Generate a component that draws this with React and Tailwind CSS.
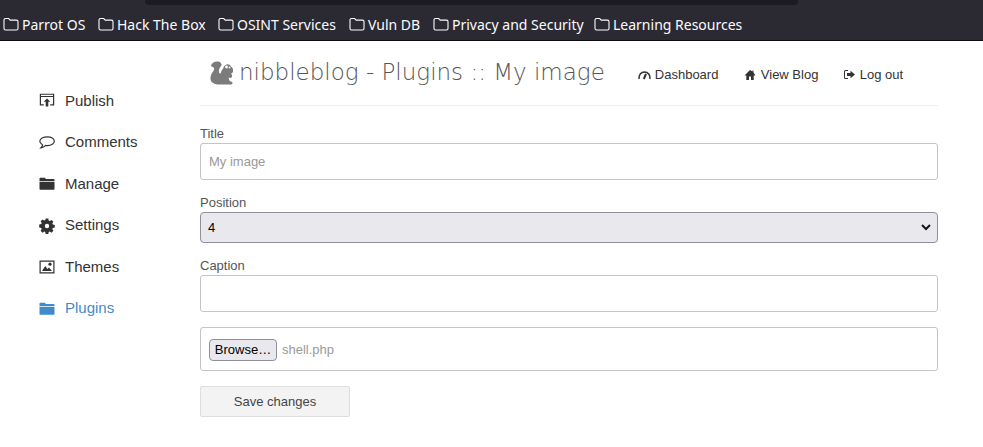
import React from "react";

const Folder = () => (
  <svg width="16" height="14" viewBox="0 0 16 14" fill="none" stroke="#fbfbfe" strokeWidth="1.1" className="shrink-0">
    <path d="M1 11.500V3a1.500 1.500 0 0 1 1.500-1.500h3.200l1.500 1.600h6.300A1.500 1.500 0 0 1 15 4.600v6.900a1.500 1.500 0 0 1-1.500 1.500h-11A1.500 1.500 0 0 1 1 11.500z" />
  </svg>
);

const bookmarks = [
  ["Parrot OS", "w-[95px]"],
  ["Hack The Box", "w-[120px]"],
  ["OSINT Services", "w-[131px]"],
  ["Vuln DB", "w-[84px]"],
  ["Privacy and Security", "w-[161px]"],
  ["Learning Resources", "w-[150px]"],
];

const Ico = ({ children, c = "#333" }) => (
  <svg width="16" height="16" viewBox="0 0 16 16" fill={c} className="shrink-0">{children}</svg>
);

const menu = [
  ["Publish", <Ico><path fillRule="evenodd" d="M.8.800h14.400v11.700h-4v-1.200h2.800V4H2v7.300h2.800v1.200h-4zM2 1.800v1.100h12V1.800zM8 5.500l3.300 3.300H9.300v4.700H6.700V8.800H4.700z" /></Ico>],
  ["Comments", <Ico><path fill="none" stroke="#333" strokeWidth="1.200" d="M8.500 1.800c3.700 0 6.800 1.900 6.800 4.400s-3.100 4.400-6.800 4.400c-.6 0-1.200 0-1.800-.2-1.100 1.200-2.800 2.200-4.700 2.400.9-.8 1.500-1.700 1.600-2.900C2 8.900.8 7.700.8 6.200c0-2.500 3.600-4.400 7.700-4.400z" /></Ico>],
  ["Manage", <Ico><path d="M.5 4V2.800C.5 2.200 1 1.800 1.500 1.800h4.300L7 3.100h7.700c.5 0 .8.400.8.900V5H.5zM.5 5.800h15v7c0 .6-.4 1-1 1h-13c-.6 0-1-.4-1-1z" /></Ico>],
  ["Settings", <Ico><path fillRule="evenodd" d="M6.700.500h2.600l.4 2 1.100.5 1.700-1.100 1.900 1.900-1.100 1.700.5 1.100 2 .4v2.600l-2 .4-.5 1.100 1.100 1.700-1.900 1.900-1.700-1.100-1.100.5-.4 2H6.700l-.4-2-1.100-.5-1.700 1.100-1.900-1.900 1.100-1.700-.5-1.100-2-.4V6.500l2-.4.5-1.100-1.100-1.700 1.900-1.900 1.700 1.100 1.100-.5zM8 5.800a2.200 2.200 0 1 0 0 4.400 2.200 2.200 0 0 0 0-4.400z" /></Ico>],
  ["Themes", <Ico><path fillRule="evenodd" d="M.5 1.500h15v13H.5zM1.700 2.700v10.600h12.600V2.700z" /><path d="M3 12l3.200-5 2.300 3 1.500-1.500L13 12z" /><circle cx="11" cy="5.200" r="1.600" /></Ico>],
  ["Plugins", <Ico c="#428bca"><path d="M.5 4V2.800C.5 2.200 1 1.800 1.500 1.800h4.300L7 3.100h7.700c.5 0 .8.400.8.900V5H.5zM.5 5.800h15v7c0 .6-.4 1-1 1h-13c-.6 0-1-.4-1-1z" /></Ico>],
];

const top = [
  ["Dashboard", <svg width="13" height="12" viewBox="0 0 13 12" fill="none" stroke="#333" strokeWidth="1.500" className="shrink-0"><path d="M1.200 10C.5 6 3 3 6.500 3s6 3 5.300 7" /><path d="M5.800 10l2.200-5" strokeWidth="2" /></svg>, "gap-[4px]", "w-[81px]"],
  ["View Blog", <svg width="12" height="12" viewBox="0 0 12 12" fill="#333" className="shrink-0"><path d="M6 1L.5 6.500h1.800V11h2.700V7.500h2V11h2.700V6.500h1.800L9.500 3.500V1.500H8.500V2.500z" /></svg>, "gap-[5px]", "w-[74px]"],
  ["Log out", <svg width="13" height="12" viewBox="0 0 13 12" fill="#333" className="shrink-0"><path fillRule="evenodd" d="M1 2.500A1.500 1.500 0 0 1 2.500 1H5v1H2.500a.5.500 0 0 0-.5.500v6a.5.500 0 0 0 .5.500H5v1H2.500A1.500 1.500 0 0 1 1 8.500zM7.500 1.800L12 5.500 7.500 9.200V7H4V4h3.500z" /></svg>, "gap-[4px]", "w-[60px]"],
];

const Label = ({ children }) => (
  <label className="block text-[13px] leading-[18px] text-[#555]">{children}</label>
);

export default function App() {
  return (
    <div className="h-[447px] w-[983px] overflow-hidden bg-white font-['Liberation_Sans',Arial,sans-serif]">
      <header className="h-[41px] border-b border-[#0c0c0d] bg-[#2b2a33]">
        <div className="ml-[145px] h-[5px] w-[653px] rounded-b-[4px] bg-[#1c1b22]" />
        <nav className="mt-[9px] flex h-[20px] items-center pl-[3px] font-['Noto_Sans',sans-serif] text-[14px] text-[#fbfbfe]">
          {bookmarks.map(([name, w]) => (
            <span key={name} className={`flex items-center gap-[3px] whitespace-nowrap ${w}`}>
              <Folder />
              {name}
            </span>
          ))}
        </nav>
      </header>

      <div className="flex">
        <aside className="w-[200px] shrink-0 pl-[39px] pt-[51px]">
          <ul>
            {menu.map(([name, icon]) => (
              <li
                key={name}
                className={`mb-[23.500px] flex h-[18px] items-center gap-[10px] text-[15px] ${name === "Plugins" ? "text-[#428bca]" : "text-[#333]"}`}
              >
                {icon}
                {name}
              </li>
            ))}
          </ul>
        </aside>

        <main className="w-[738px]">
          <div className="flex h-[65px] items-start border-b border-[#eee] pl-[10px] pt-[15px]">
            <svg width="23" height="24" viewBox="0 0 23 24" fill="#7b7b7b" className="mt-[5px] shrink-0">
              <path d="M8 .500C4.500.200 1.500 2 1 4.500c1 1.500 2.500 1.500 3 2.500.8 2-1.500 4-2.700 6.500C-.5 17.500.5 21 4 22.500c1.500.7 3 1 5 1h11c1.500 0 2.500-.5 2.500-1.500s-1.500-1.500-2.500-1.700c-.8-1-1.300-2.300-1.300-3.800.8.500 2.300.7 3-.2.800-1 .3-2.600-.5-3.800 1.800-.7 2.300-2 2-3.500-.3-2-1.500-3.200-2.700-3.800.3-1-.7-1.800-1.700-1.500-.5-.5-1.800-.5-2.500 0-1.800.5-3 2-3 3.800-1.500 1-2 3-2.500 4.500-.5 1-1.500.5-1.800-1-.6-3 1.500-5 2.700-7C11.300 2 10 .7 8 .500z" />
              <circle cx="16.500" cy="6" r="1.400" fill="#fff" />
              <circle cx="19.500" cy="6.500" r="0.900" fill="#fff" />
            </svg>
            <h1 className="ml-[6px] whitespace-nowrap font-['DejaVu_Sans',sans-serif] text-[23px] font-extralight leading-[33px] text-[#555]">
              nibbleblog - Plugins :: My image
            </h1>
            <div className="ml-[33px] mt-[10px] flex gap-[25px] text-[13px] leading-[18px] text-[#333]">
              {top.map(([name, icon, gap, w]) => (
                <span key={name} className={`flex items-center whitespace-nowrap ${gap} ${w}`}>
                  {icon}
                  {name}
                </span>
              ))}
            </div>
          </div>

          <form className="pt-[19px]">
            <Label>Title</Label>
            <div className="flex h-[37px] items-center rounded-[3px] border border-[#c4c4c4] px-[8px] text-[13px] text-[#999]">
              My image
            </div>

            <div className="mt-[14px]"><Label>Position</Label></div>
            <div className="flex h-[31px] items-center justify-between rounded-[4px] border border-[#8f8f9d] bg-[#e9e9ed] pl-[7px] pr-[6px] text-[13px] text-black">
              4
              <svg width="10" height="7" viewBox="0 0 10 7" fill="none" stroke="#15141a" strokeWidth="2"><path d="M1 1l4 4 4-4" /></svg>
            </div>

            <div className="mt-[14px]"><Label>Caption</Label></div>
            <div className="h-[37px] rounded-[3px] border border-[#c4c4c4]" />

            <div className="mt-[15px] flex h-[44px] items-center gap-[5px] rounded-[3px] border border-[#c4c4c4] pl-[8px] pt-[2px] text-[13px] text-[#999]">
              <span className="flex h-[22px] w-[68px] items-center justify-center rounded-[4px] border border-[#8f8f9d] bg-[#e9e9ed] text-[13px] text-black">Browse…</span>
              shell.php
            </div>

            <button type="button" className="mt-[15px] h-[31px] w-[150px] rounded-[2px] border border-[#ddd] bg-[#f3f3f3] text-[13px] text-[#444]">
              Save changes
            </button>
          </form>
        </main>
      </div>
    </div>
  );
}
